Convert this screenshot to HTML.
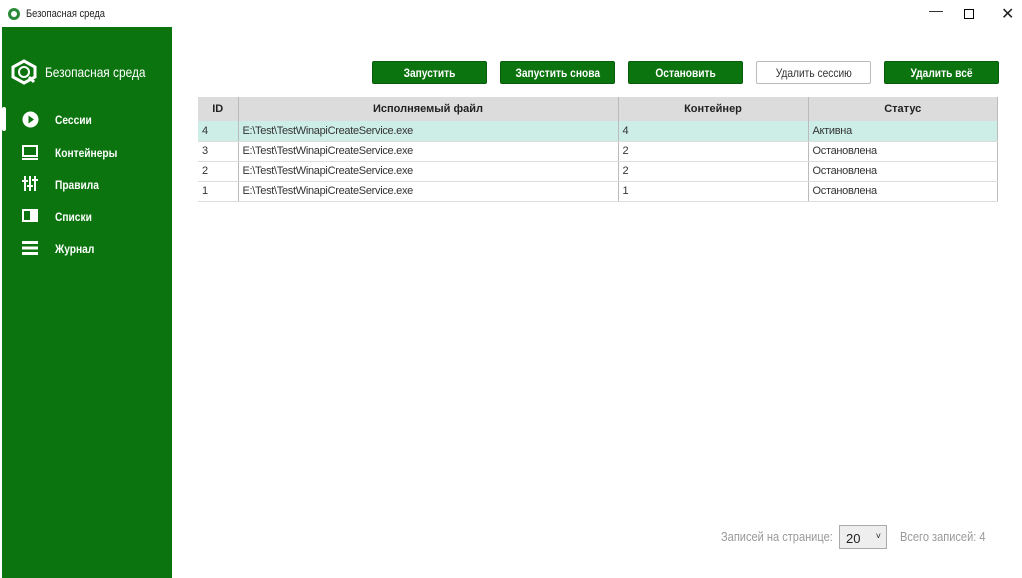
<!DOCTYPE html>
<html><head><meta charset="utf-8"><style>
*{margin:0;padding:0;box-sizing:border-box}
body{width:1022px;height:578px;overflow:hidden;background:#fff;font-family:"Liberation Sans",sans-serif;position:relative;color:#222}
.tb{position:absolute;left:0;top:0;width:1022px;height:27px;background:#fff;font-size:12px}
.side{position:absolute;left:2px;top:27px;width:170px;height:551px;background:#0b740f}
.nav{position:absolute;left:53px;color:#fff;font-size:12px;font-weight:bold;transform:scaleX(.85);transform-origin:left}
.ic{position:absolute;left:20px}
.btn{position:absolute;top:61px;width:115px;height:23px;background:#0b740f;border:1px solid #085c0b;color:#fff;font-size:12px;font-weight:bold;text-align:center;line-height:22px;border-radius:2px;white-space:nowrap}
.btn span{display:inline-block;transform:scaleX(.85)}
.btn.w{background:#fff;color:#333;border:1px solid #bbb;font-weight:normal}
table{position:absolute;left:198px;top:97px;border-collapse:collapse;font-size:11px;width:800px}
th{background:#dcdcdc;height:24px;font-weight:bold;font-size:11px;border-right:1px solid #bbb}
td{height:20px;border-bottom:1px solid #ddd;border-right:1px solid #bbb;padding-left:4px;color:#333;letter-spacing:-.3px}
tr.a td{background:#cdeee6}
.s{display:inline-block;transform:scaleX(.85);transform-origin:left;white-space:nowrap}
</style></head><body>
<div class="tb">
<svg style="position:absolute;left:7px;top:7px" width="14" height="14"><circle cx="7" cy="7" r="6" fill="#2a8a3a"/><circle cx="7" cy="7" r="3" fill="#fff"/></svg>
<span style="position:absolute;left:26px;top:8px;font-size:11px" class="s">Безопасная среда</span>
<span style="position:absolute;left:929px;top:2px;font-size:14px">&#8212;</span>
<div style="position:absolute;left:964px;top:9px;width:10px;height:10px;border:1px solid #000"></div>
<span style="position:absolute;left:1001px;top:4px;font-size:16px">&#x2715;</span>
</div>
<div class="side">
<svg style="position:absolute;left:8px;top:32px" width="28" height="26"><path d="M14 2 L25 8 L25 18 L14 24 L3 18 L3 8Z" fill="none" stroke="#fff" stroke-width="3"/><circle cx="14" cy="13" r="6" fill="#fff"/><circle cx="14" cy="13" r="4" fill="#0b740f"/><path d="M19 18 L24 23" stroke="#fff" stroke-width="3"/></svg>
<div style="position:absolute;left:43px;top:37px;color:#fff;font-size:14px" class="s">Безопасная среда</div>
<div style="position:absolute;left:0;top:80px;width:4px;height:24px;background:#fff;border-radius:2px"></div>
<svg class="ic" style="top:84px" width="17" height="17"><circle cx="8.5" cy="8.5" r="8" fill="#fff"/><path d="M6.5 4.5 L12 8.5 L6.5 12.5Z" fill="#0b740f"/></svg>
<div class="nav" style="top:86px">Сессии</div>
<svg class="ic" style="top:118px" width="16" height="15"><rect x="1" y="1" width="14" height="10" fill="none" stroke="#fff" stroke-width="2"/><rect x="0" y="13" width="16" height="2" fill="#fff"/></svg>
<div class="nav" style="top:119px">Контейнеры</div>
<svg class="ic" style="top:149px" width="16" height="15" stroke="#fff" stroke-width="2"><path d="M3 0V15M8 0V15M13 0V15"/><path d="M0 5H6M5 10H11M10 4H16"/></svg>
<div class="nav" style="top:151px">Правила</div>
<svg class="ic" style="top:182px" width="16" height="13"><rect x="1" y="1" width="14" height="11" fill="none" stroke="#fff" stroke-width="2"/><rect x="8" y="1" width="7" height="11" fill="#fff"/></svg>
<div class="nav" style="top:183px">Списки</div>
<svg class="ic" style="top:214px" width="16" height="14" fill="#fff"><rect y="0" width="16" height="3"/><rect y="5.5" width="16" height="3"/><rect y="11" width="16" height="3"/></svg>
<div class="nav" style="top:215px">Журнал</div>
</div>
<div class="btn" style="left:372px"><span>Запустить</span></div>
<div class="btn" style="left:500px"><span>Запустить снова</span></div>
<div class="btn" style="left:628px"><span>Остановить</span></div>
<div class="btn w" style="left:756px"><span>Удалить сессию</span></div>
<div class="btn" style="left:884px"><span>Удалить всё</span></div>
<table>
<tr><th style="width:40px">ID</th><th style="width:380px">Исполняемый файл</th><th style="width:190px">Контейнер</th><th>Статус</th></tr>
<tr class="a"><td>4</td><td>E:\Test\TestWinapiCreateService.exe</td><td>4</td><td>Активна</td></tr>
<tr><td>3</td><td>E:\Test\TestWinapiCreateService.exe</td><td>2</td><td>Остановлена</td></tr>
<tr><td>2</td><td>E:\Test\TestWinapiCreateService.exe</td><td>2</td><td>Остановлена</td></tr>
<tr><td>1</td><td>E:\Test\TestWinapiCreateService.exe</td><td>1</td><td>Остановлена</td></tr>
</table>
<div style="position:absolute;left:721px;top:529px;font-size:13px;color:#999" class="s">Записей на странице:</div>
<div style="position:absolute;left:839px;top:525px;width:48px;height:24px;border:1px solid #aaa;background:#eee;font-size:13px;padding:5px 6px">20<span style="position:absolute;right:5px;top:5px;font-size:9px">&#709;</span></div>
<div style="position:absolute;left:900px;top:529px;font-size:13px;color:#999" class="s">Всего записей: 4</div>
</body></html>
